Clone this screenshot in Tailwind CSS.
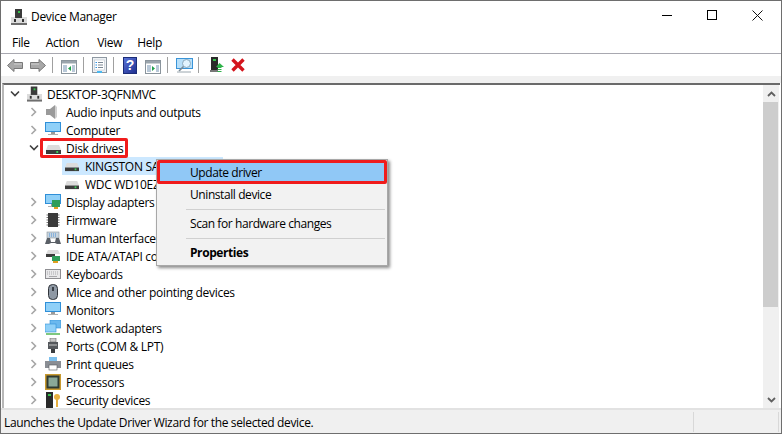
<!DOCTYPE html>
<html lang="en">
<head>
<meta charset="UTF-8">
<title>Device Manager</title>
<script src="https://cdn.jsdelivr.net/npm/@tailwindcss/browser@4"></script>
</head>
<body class="bg-white overflow-hidden">
<svg width="0" height="0" class="absolute">
  <defs>
    <symbol id="tower" viewBox="0 0 16 16">
      <rect x="4" y="0" width="7" height="9" fill="#3a3a3a"/>
      <rect x="7" y="2" width="2" height="2" fill="#35c04a"/>
      <rect x="0" y="8" width="16" height="8" fill="#dcdcdc"/>
      <rect x="4" y="8" width="7" height="1" fill="#3a3a3a"/>
      <rect x="0" y="14" width="16" height="2" fill="#6e6e6e"/>
      <rect x="3" y="10" width="2" height="3" fill="#333"/>
      <rect x="11" y="10" width="2" height="3" fill="#333"/>
    </symbol>
    <symbol id="chev" viewBox="0 0 8 10">
      <path d="M1.5 1 L5.5 5 L1.5 9" fill="none" stroke="#a6a6a6" stroke-width="1.6"/>
    </symbol>
    <symbol id="chevdown" viewBox="0 0 10 8">
      <path d="M1 1.5 L5 5.5 L9 1.5" fill="none" stroke="#404040" stroke-width="1.6"/>
    </symbol>
    <symbol id="disk" viewBox="0 0 16 10" preserveAspectRatio="none">
      <path d="M2 0 H14 L16 5 H0 Z" fill="#dcdcdc"/>
      <rect x="0" y="5" width="16" height="4" fill="#3c3c3c"/>
      <rect x="11" y="6" width="2" height="2" fill="#3fd05a"/>
    </symbol>
    <symbol id="monitor" viewBox="0 0 16 16">
      <rect x="0" y="0" width="16" height="10" fill="#2f8fd8"/>
      <rect x="1" y="1" width="14" height="8" fill="#8fd0f8"/>
      <rect x="6" y="10" width="4" height="2" fill="#9a9a9a"/>
      <rect x="3" y="12" width="10" height="1" fill="#b0b0b0"/>
    </symbol>
    <symbol id="window" viewBox="0 0 16 14">
      <rect x="0.5" y="0.5" width="15" height="13" fill="#fff" stroke="#8a949c"/>
      <rect x="1" y="1" width="14" height="2.5" fill="#9aa4ac"/>
      <rect x="2" y="5" width="4" height="7" fill="#b8c8d8"/>
      <rect x="11" y="5" width="3" height="7" fill="#b8c8d8"/>
    </symbol>
  </defs>
</svg>

<div class="w-[782px] h-[434px] border border-[#6e6e6e] flex flex-col bg-white text-[12px] text-black font-['Open_Sans',sans-serif] relative">
  <!-- title bar -->
  <div class="h-[31px] flex items-center shrink-0">
    <svg class="ml-[10px] w-[16px] h-[16px]"><use href="#tower"/></svg>
    <span class="ml-[4px] tracking-[-0.3px]">Device Manager</span>
    <div class="ml-auto flex items-center mb-[3px]">
      <div class="w-[10px] h-px bg-black mr-[35px]"></div>
      <div class="w-[10px] h-[10px] border border-black mr-[35px]"></div>
      <svg class="w-[11px] h-[11px] mr-[18px]" viewBox="0 0 11 11"><path d="M0.5 0.5 L10.5 10.5 M10.5 0.5 L0.5 10.5" stroke="#111" stroke-width="1"/></svg>
    </div>
  </div>
  <!-- menu -->
  <div class="h-[22px] flex items-center shrink-0 border-b border-[#a8a8b0] tracking-[-0.3px]">
    <span class="ml-[11px]">File</span>
    <span class="ml-[16px]">Action</span>
    <span class="ml-[18px]">View</span>
    <span class="ml-[15px]">Help</span>
  </div>
  <!-- toolbar -->
  <div class="h-[22px] flex items-center shrink-0 pl-[6px]">
    <svg class="w-[16px] h-[13px]" viewBox="0 0 16 13"><path d="M0.5 6.5 L7 0.5 V3.5 H15.5 V9.5 H7 V12.5 Z" fill="#a8a8a8" stroke="#787878"/><path d="M7 5 H15" stroke="#d0d0d0"/></svg>
    <svg class="w-[16px] h-[13px] ml-[7px]" viewBox="0 0 16 13"><path d="M15.5 6.5 L9 0.5 V3.5 H0.5 V9.5 H9 V12.5 Z" fill="#a8a8a8" stroke="#787878"/><path d="M1 5 H9" stroke="#d0d0d0"/></svg>
    <div class="w-px h-[16px] bg-[#a0a0a0] ml-[6px]"></div>
    <svg class="w-[16px] h-[14px] ml-[8px] mt-[3px]" viewBox="0 0 16 14"><use href="#window"/><path d="M10 6 L7 8.5 L10 11 Z" fill="#1f9e4a"/></svg>
    <div class="w-px h-[16px] bg-[#a0a0a0] ml-[6px]"></div>
    <svg class="w-[15px] h-[16px] ml-[8px]" viewBox="0 0 15 16"><rect x="0.5" y="0.5" width="14" height="15" fill="#eef1f4" stroke="#8e98a2"/><rect x="2.5" y="3" width="10" height="10" fill="#fff" stroke="#b8c2cc" stroke-width="0.6"/><path d="M6 5.5 H11 M6 8 H11 M6 10.5 H11" stroke="#7a8794"/><path d="M3.5 5.5 H5 M3.5 8 H5 M3.5 10.5 H5" stroke="#2d8fe0"/><rect x="5" y="14" width="5" height="2" fill="#4ab8f0"/></svg>
    <div class="w-px h-[16px] bg-[#a0a0a0] ml-[6px]"></div>
    <div class="w-[14px] h-[17px] ml-[9px] bg-[linear-gradient(135deg,#5a74d8,#1f2f90)] border border-[#1b2c78] text-white font-bold text-[14px] leading-[15px] text-center font-['Liberation_Sans',sans-serif]">?</div>
    <svg class="w-[16px] h-[14px] ml-[8px] mt-[3px]" viewBox="0 0 16 14"><use href="#window"/><path d="M7 6 L10 8.5 L7 11 Z" fill="#1f9e4a"/></svg>
    <div class="w-px h-[16px] bg-[#a0a0a0] ml-[6px]"></div>
    <svg class="w-[17px] h-[15px] ml-[8px]" viewBox="0 0 17 15"><rect x="0.5" y="0.5" width="16" height="10" fill="#b8e0fa" stroke="#3a94d8"/><circle cx="10.5" cy="5.5" r="4" fill="#e2f4ff" stroke="#8aa8bc"/><path d="M7.5 8.5 L3 13" stroke="#7a8a96" stroke-width="1.6"/><path d="M1 14 H15" stroke="#9aa6ae"/></svg>
    <div class="w-px h-[16px] bg-[#a0a0a0] ml-[5px]"></div>
    <svg class="w-[14px] h-[16px] ml-[11px]" viewBox="0 0 14 16"><rect x="1" y="0" width="7" height="13" fill="#2a2a2a"/><rect x="3" y="2" width="3" height="2" fill="#35c04a"/><rect x="0" y="13" width="8" height="2" fill="#777"/><path d="M9.5 6 L14 10 H6 Z" fill="#2fb34a"/><path d="M7.5 10.5 H11.5 M7.5 12.5 H11.5 M7.5 14.5 H11.5" stroke="#2fb34a"/></svg>
    <svg class="w-[14px] h-[14px] ml-[7px]" viewBox="0 0 14 14"><path d="M1.5 1.5 L12.5 12.5 M12.5 1.5 L1.5 12.5" stroke="#d4141c" stroke-width="3.4"/></svg>
  </div>
  <!-- strip above tree -->
  <div class="h-[7px] bg-[#f0f0f0] shrink-0"></div>

  <!-- tree and scrollbar -->
  <div class="flex-1 min-h-0 flex ml-[1px] mr-px border-l-2 border-l-[#b8b8b8] border-t-2 border-t-[#6a6a6a] tracking-[-0.3px]">
    <div class="flex-1 overflow-hidden [&_span]:pt-px">
      <div class="h-[18px] flex items-center pl-[6px]"><svg class="w-[10px] h-[8px]"><use href="#chevdown"/></svg><svg class="w-[15px] h-[16px] ml-[7px]"><use href="#tower"/></svg><span class="ml-[5px]">DESKTOP-3QFNMVC</span></div>

      <div class="h-[18px] flex items-center pl-[26px]"><svg class="w-[8px] h-[10px]"><use href="#chev"/></svg><svg class="w-[16px] h-[16px] ml-[7px]" viewBox="0 0 16 16"><path d="M1 5 H5 L10 1 V15 L5 11 H1 Z" fill="#9a9a9a"/><path d="M10 1 V15 L12 13 V3 Z" fill="#d0d0d0"/></svg><span class="ml-[5px]">Audio inputs and outputs</span></div>

      <div class="h-[18px] flex items-center pl-[26px]"><svg class="w-[8px] h-[10px]"><use href="#chev"/></svg><svg class="w-[16px] h-[16px] ml-[7px]"><use href="#monitor"/></svg><span class="ml-[5px]">Computer</span></div>

      <div class="h-[18px] flex items-center pl-[25px]"><svg class="w-[10px] h-[8px]"><use href="#chevdown"/></svg><svg class="w-[15px] h-[10px] ml-[7px] mt-[3px]"><use href="#disk"/></svg><span class="ml-[5px]">Disk drives</span></div>

      <!-- names run on under the context menu, so they are clipped at its edge -->
      <div class="h-[18px] flex items-center ml-[58px] w-[161px] bg-[#cce8ff]"><svg class="w-[14px] h-[9px] ml-[3px] mt-[3px] shrink-0"><use href="#disk"/></svg><span class="ml-[6px] w-[71px] shrink-0 overflow-hidden whitespace-nowrap">KINGSTON SA400S37240G</span></div>

      <div class="h-[18px] flex items-center ml-[58px]"><svg class="w-[14px] h-[9px] ml-[3px] mt-[3px] shrink-0"><use href="#disk"/></svg><span class="ml-[6px] w-[71px] shrink-0 overflow-hidden whitespace-nowrap">WDC WD10EZEX-08WN4A0</span></div>

      <div class="h-[18px] flex items-center pl-[26px]"><svg class="w-[8px] h-[10px]"><use href="#chev"/></svg><svg class="w-[16px] h-[16px] ml-[7px]" viewBox="0 0 16 16"><use href="#monitor"/><rect x="7" y="6" width="8" height="7" fill="#2f9e5a"/><rect x="9" y="13" width="4" height="2" fill="#e0a020"/></svg><span class="ml-[5px]">Display adapters</span></div>

      <div class="h-[18px] flex items-center pl-[26px]"><svg class="w-[8px] h-[10px]"><use href="#chev"/></svg><svg class="w-[16px] h-[16px] ml-[7px]" viewBox="0 0 16 16"><rect x="3" y="1" width="10" height="14" fill="#3a3a3a"/><path d="M1.5 3 H3 M1.5 5.5 H3 M1.5 8 H3 M1.5 10.5 H3 M1.5 13 H3 M13 3 H14.5 M13 5.5 H14.5 M13 8 H14.5 M13 10.5 H14.5 M13 13 H14.5" stroke="#777"/></svg><span class="ml-[5px]">Firmware</span></div>

      <div class="h-[18px] flex items-center pl-[26px]"><svg class="w-[8px] h-[10px]"><use href="#chev"/></svg><svg class="w-[16px] h-[16px] ml-[7px]" viewBox="0 0 16 16"><rect x="2" y="2" width="12" height="6" fill="#c8d4de" stroke="#8a949c" stroke-width="0.6"/><path d="M4 4 H12 M4 6 H12" stroke="#4a90d8" stroke-dasharray="1 1"/><path d="M0 14 L2 8 H5 L6 12 H10 L11 8 H14 L16 14 L12 14 L10 13 H6 L4 14 Z" fill="#5a5f66"/></svg><span class="ml-[5px] w-[90px] shrink-0 overflow-hidden whitespace-nowrap">Human Interface Devices</span></div>

      <div class="h-[18px] flex items-center pl-[26px]"><svg class="w-[8px] h-[10px]"><use href="#chev"/></svg><svg class="w-[16px] h-[16px] ml-[7px]" viewBox="0 0 16 16"><path d="M3 2 H13 L15 6 H1 Z" fill="#dcdcdc"/><rect x="1" y="6" width="9" height="3" fill="#3c3c3c"/><rect x="7" y="8" width="8" height="5" fill="#2f9e5a"/><rect x="8" y="13" width="5" height="2" fill="#e0a020"/></svg><span class="ml-[5px] w-[90px] shrink-0 overflow-hidden whitespace-nowrap">IDE ATA/ATAPI controllers</span></div>

      <div class="h-[18px] flex items-center pl-[26px]"><svg class="w-[8px] h-[10px]"><use href="#chev"/></svg><svg class="w-[16px] h-[16px] ml-[7px]" viewBox="0 0 16 16"><rect x="0.5" y="3.5" width="15" height="9" fill="#e8e8ea" stroke="#8e8e92"/><path d="M2 6 H14 M2 8 H14" stroke="#a8a8ac" stroke-dasharray="1 1"/><path d="M4 10.5 H12" stroke="#a8a8ac"/></svg><span class="ml-[5px]">Keyboards</span></div>

      <div class="h-[18px] flex items-center pl-[26px]"><svg class="w-[8px] h-[10px]"><use href="#chev"/></svg><svg class="w-[16px] h-[16px] ml-[7px]" viewBox="0 0 16 16"><rect x="3.5" y="0.5" width="9" height="15" rx="4" fill="#8e98a4" stroke="#30343a"/><rect x="7" y="3" width="2" height="4" fill="#3a4048"/></svg><span class="ml-[5px]">Mice and other pointing devices</span></div>

      <div class="h-[18px] flex items-center pl-[26px]"><svg class="w-[8px] h-[10px]"><use href="#chev"/></svg><svg class="w-[16px] h-[16px] ml-[7px]"><use href="#monitor"/></svg><span class="ml-[5px]">Monitors</span></div>

      <div class="h-[18px] flex items-center pl-[26px]"><svg class="w-[8px] h-[10px]"><use href="#chev"/></svg><svg class="w-[16px] h-[16px] ml-[7px]" viewBox="0 0 16 16"><rect x="5" y="0" width="11" height="8" fill="#6ab8ee" stroke="#2f8fd8" stroke-width="0.6"/><rect x="0" y="4" width="11" height="8" fill="#8fd0f8" stroke="#2f8fd8" stroke-width="0.6"/><rect x="1" y="13" width="14" height="2" fill="#7fc87f"/></svg><span class="ml-[5px]">Network adapters</span></div>

      <div class="h-[18px] flex items-center pl-[26px]"><svg class="w-[8px] h-[10px]"><use href="#chev"/></svg><svg class="w-[16px] h-[16px] ml-[7px]" viewBox="0 0 16 16"><rect x="5" y="0" width="6" height="4" fill="#c8c8c8" stroke="#666" stroke-width="0.6"/><rect x="3" y="4" width="10" height="7" fill="#55585c"/><path d="M4 7 H12" stroke="#c8c8c8"/><rect x="6" y="11" width="4" height="4" fill="#3a3c40"/></svg><span class="ml-[5px]">Ports (COM &amp; LPT)</span></div>

      <div class="h-[18px] flex items-center pl-[26px]"><svg class="w-[8px] h-[10px]"><use href="#chev"/></svg><svg class="w-[16px] h-[16px] ml-[7px]" viewBox="0 0 16 16"><rect x="4" y="1" width="8" height="4" fill="#7cc0ee"/><rect x="0" y="5" width="16" height="7" fill="#8a8e94"/><rect x="4" y="9" width="8" height="5" fill="#fff" stroke="#55585c" stroke-width="0.6"/></svg><span class="ml-[5px]">Print queues</span></div>

      <div class="h-[18px] flex items-center pl-[26px]"><svg class="w-[8px] h-[10px]"><use href="#chev"/></svg><svg class="w-[16px] h-[16px] ml-[7px]" viewBox="0 0 16 16"><rect x="0" y="0" width="16" height="16" fill="#c89a30"/><rect x="1.5" y="1.5" width="13" height="13" fill="#2f3a32"/><rect x="3.5" y="3.5" width="9" height="9" fill="#8aa898"/></svg><span class="ml-[5px]">Processors</span></div>

      <div class="h-[18px] flex items-center pl-[26px]"><svg class="w-[8px] h-[10px]"><use href="#chev"/></svg><svg class="w-[16px] h-[16px] ml-[7px]" viewBox="0 0 16 16"><rect x="1" y="0" width="7" height="16" fill="#2a2a2a"/><rect x="3" y="2" width="3" height="2" fill="#35c04a"/><circle cx="12" cy="5" r="3" fill="#e8b040"/><rect x="11" y="7" width="2" height="8" fill="#e8b040"/></svg><span class="ml-[5px]">Security devices</span></div>
    </div>

    <!-- scrollbar -->
    <div class="w-[16px] bg-[#f0f0f0] flex flex-col shrink-0 mr-px">
      <div class="h-[17px] flex items-center justify-center shrink-0"><svg class="w-[9px] h-[6px]" viewBox="0 0 9 6"><path d="M1 5 L4.5 1.5 L8 5" fill="none" stroke="#606060" stroke-width="1.8"/></svg></div>
      <div class="h-[205px] w-[15px] bg-[#cdcdcd] shrink-0"></div>
      <div class="h-[17px] mt-auto flex items-center justify-center shrink-0"><svg class="w-[9px] h-[6px]" viewBox="0 0 9 6"><path d="M1 1 L4.5 4.5 L8 1" fill="none" stroke="#606060" stroke-width="1.8"/></svg></div>
    </div>
  </div>

  <!-- status bar -->
  <div class="h-[25px] bg-[#f0f0f0] border-t-2 border-[#e2e2e2] shrink-0 flex items-center tracking-[-0.36px]">
    <span class="ml-[3px] w-[689px] pt-[2px]">Launches the Update Driver Wizard for the selected device.</span>
    <div class="w-px h-[20px] bg-[#d8d8d8]"></div>
    <div class="w-px h-[20px] bg-[#d8d8d8] ml-[84px]"></div>
  </div>

  <!-- red outline round Disk drives -->
  <div class="absolute left-[39px] top-[137px] w-[88px] h-[20px] border-[3px] border-[#f01c1c] rounded-[2px]"></div>

  <!-- context menu -->
  <div class="absolute left-[155px] top-[158px] w-[232px] h-[107px] bg-[#f2f2f2] border border-[#a8a8a8] shadow-[2px_2px_3px_rgba(0,0,0,0.45)] p-[2px] tracking-[-0.42px]">
    <div class="h-[22px] bg-[#90c8f6] flex items-center pl-[31px]">Update driver</div>
    <div class="h-[22px] flex items-center pl-[31px]">Uninstall device</div>
    <div class="h-px bg-[#d0d0d0] ml-[27px] mt-[3px] mb-[3px]"></div>
    <div class="h-[22px] flex items-center pl-[31px]">Scan for hardware changes</div>
    <div class="h-px bg-[#d0d0d0] ml-[27px] mt-[3px] mb-[3px]"></div>
    <div class="h-[22px] flex items-center pl-[31px] font-bold">Properties</div>
    <div class="absolute left-0 top-0 w-[230px] h-[24px] border-[3px] border-[#f01c1c] rounded-[2px]"></div>
  </div>
</div>
</body>
</html>
